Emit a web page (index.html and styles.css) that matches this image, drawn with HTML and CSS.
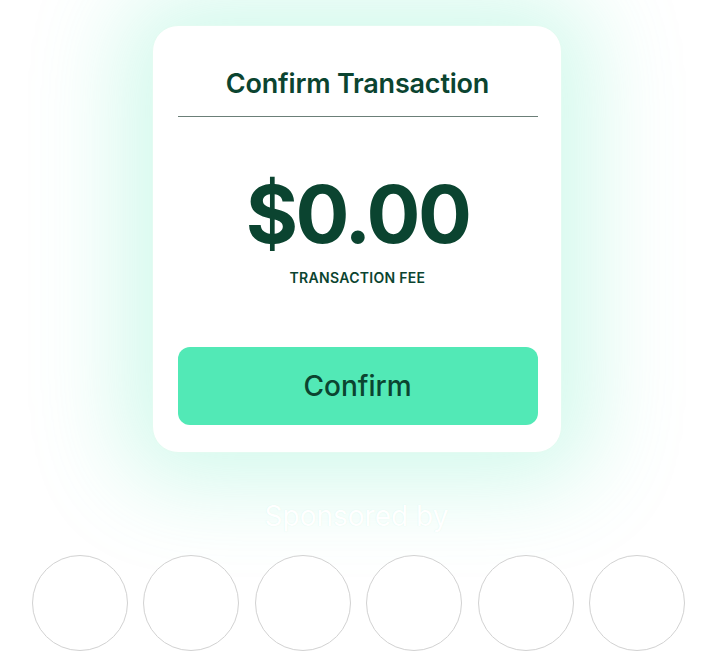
FILE: index.html
```html
<!DOCTYPE html>
<html>
<head>
<meta charset="utf-8">
<link rel="stylesheet" href="styles.css">
</head>
<body>
<main class="page">
  <section class="card">
    <h1 class="card-title">Confirm Transaction</h1>
    <hr class="divider">
    <div class="amount">$0.00</div>
    <div class="amount-label">TRANSACTION FEE</div>
    <button class="confirm-btn">Confirm</button>
  </section>
  <p class="sponsored">Sponsored by</p>
  <div class="sponsors">
    <div class="sponsor"></div>
    <div class="sponsor"></div>
    <div class="sponsor"></div>
    <div class="sponsor"></div>
    <div class="sponsor"></div>
    <div class="sponsor"></div>
  </div>
</main>
</body>
</html>
```
FILE: styles.css
```css
* { box-sizing: border-box; }
html, body { margin: 0; padding: 0; background: #ffffff; }
body {
  font-family: Inter, "Noto Sans", sans-serif;
  width: 713px;
  height: 652px;
  overflow: hidden;
}
.page {
  display: flex;
  flex-direction: column;
  align-items: center;
  padding-top: 25px;
}
.card {
  width: 410px;
  height: 428px;
  background: #ffffff;
  border: 1px solid #e3fbf1;
  border-radius: 26px;
  box-shadow: 0 0 90px 30px rgba(82, 233, 181, 0.26);
  padding: 0 23px 0 25px;
  display: flex;
  flex-direction: column;
  align-items: stretch;
}
.card-title {
  margin: 40px 0 0;
  text-align: center;
  font-size: 27px;
  font-weight: 600;
  line-height: 36px;
  color: #0b4430;
  letter-spacing: -0.2px;
}
.divider {
  margin: 14px 0 0;
  border: 0;
  height: 1px;
  background: #6b7f78;
}
.amount {
  margin-top: 52px;
  text-align: center;
  font-size: 80px;
  font-weight: 700;
  line-height: 90px;
  color: #0b4430;
  letter-spacing: -2.5px;
}
.amount-label {
  margin-top: 10px;
  text-align: center;
  font-size: 14px;
  font-weight: 600;
  line-height: 18px;
  color: #0b4430;
  letter-spacing: 0.3px;
}
.confirm-btn {
  margin-top: 60px;
  height: 78px;
  border: 0;
  border-radius: 12px;
  background: #52e9b6;
  color: #0b4430;
  font-family: Inter, "Noto Sans", sans-serif;
  font-size: 28px;
  font-weight: 450;
}
.sponsored {
  margin: 47px 0 0;
  font-size: 28px;
  line-height: 32px;
  color: #ffffff;
  text-shadow: 0 0 1px rgba(200, 245, 225, 0.6);
}
.sponsors {
  margin-top: 23px;
  display: flex;
  gap: 15.4px;
  margin-left: 4px;
}
.sponsor {
  width: 96px;
  height: 96px;
  border-radius: 50%;
  border: 1px solid #d2d2d2;
  background: #ffffff;
}
```
